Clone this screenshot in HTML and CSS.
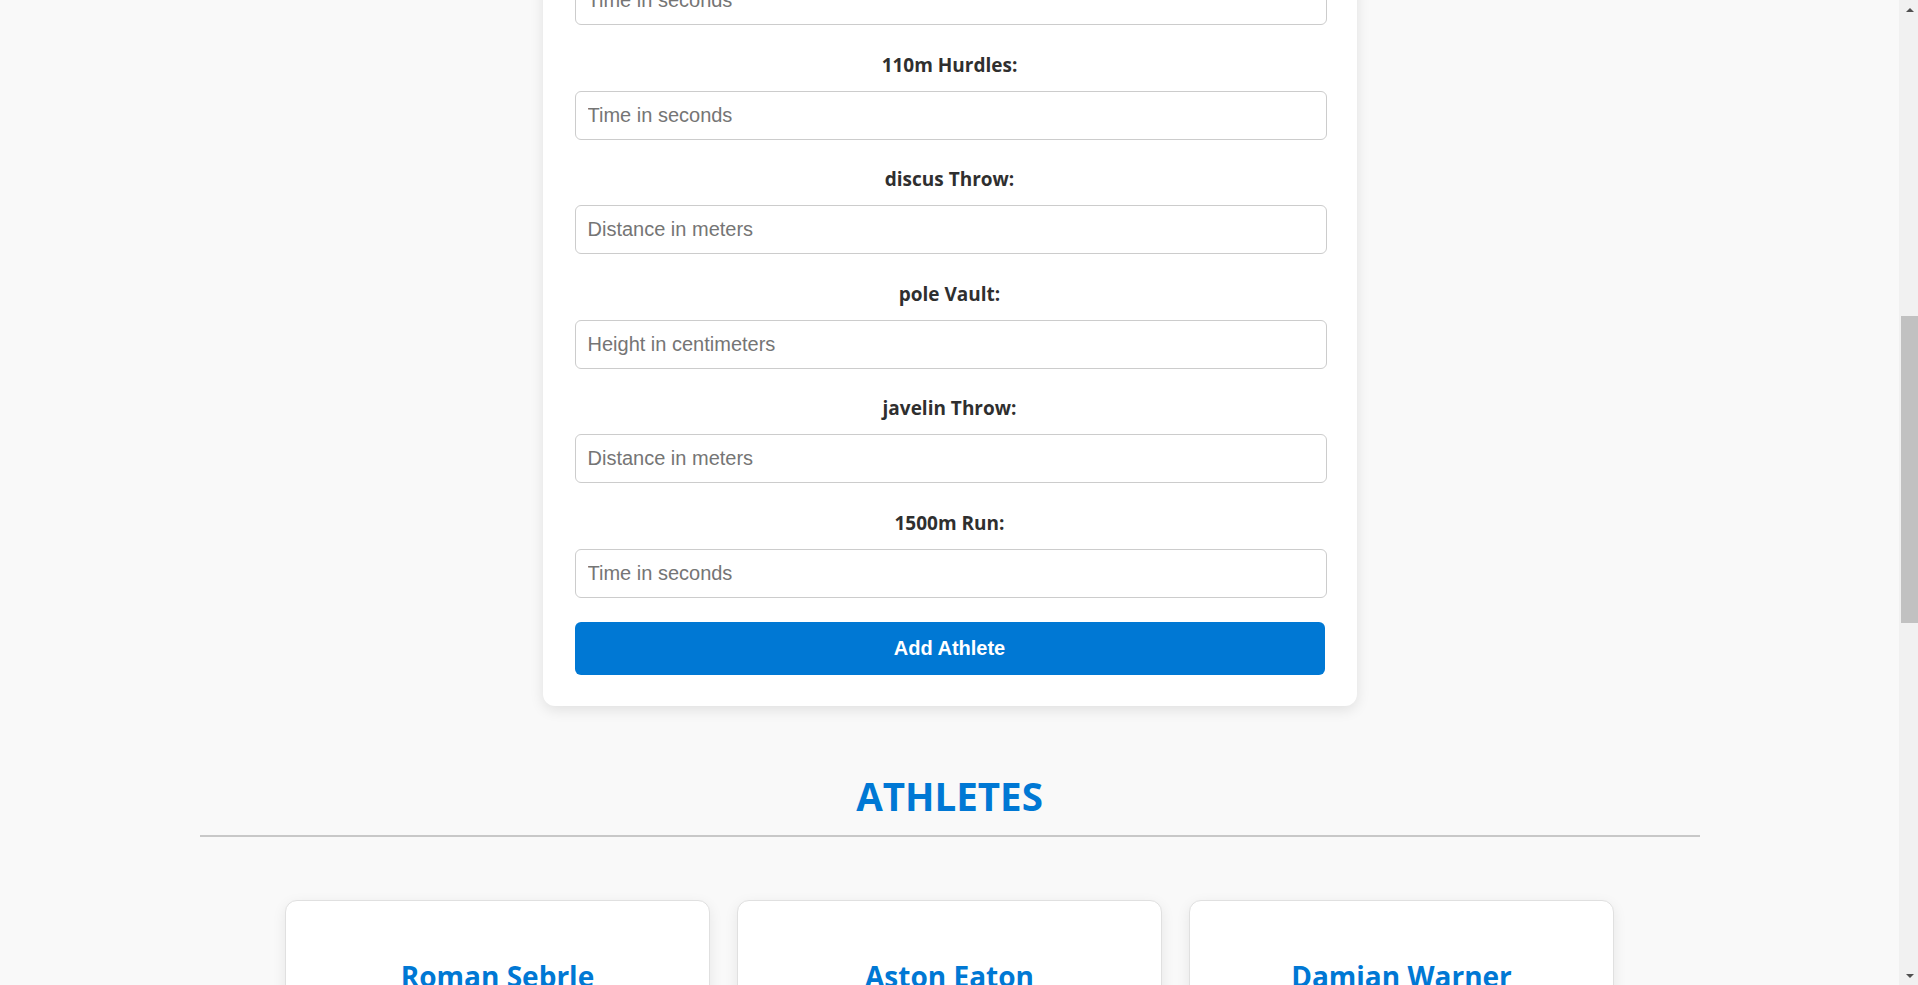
FILE: index.html
```html
<!DOCTYPE html>
<html lang="en">
<head>
<meta charset="utf-8">
<title>Decathlon Tracker</title>
<link rel="stylesheet" href="styles.css">
</head>
<body>
<div class="screen">
  <main class="page">
    <form class="form-card">
      <div class="field"><input class="field-input" type="text" placeholder="Time in seconds"></div>
      <div class="field"><label class="field-label">110m Hurdles:</label><input class="field-input" type="text" placeholder="Time in seconds"></div>
      <div class="field"><label class="field-label">discus Throw:</label><input class="field-input" type="text" placeholder="Distance in meters"></div>
      <div class="field"><label class="field-label">pole Vault:</label><input class="field-input" type="text" placeholder="Height in centimeters"></div>
      <div class="field"><label class="field-label">javelin Throw:</label><input class="field-input" type="text" placeholder="Distance in meters"></div>
      <div class="field field-last"><label class="field-label">1500m Run:</label><input class="field-input" type="text" placeholder="Time in seconds"></div>
      <button class="submit-btn" type="button">Add Athlete</button>
    </form>

    <section class="athletes">
      <h2 class="athletes-title">ATHLETES</h2>
      <hr class="athletes-rule">
      <div class="athlete-grid">
        <article class="athlete-card"><h3 class="athlete-name">Roman Sebrle</h3></article>
        <article class="athlete-card"><h3 class="athlete-name">Aston Eaton</h3></article>
        <article class="athlete-card"><h3 class="athlete-name">Damian Warner</h3></article>
      </div>
    </section>
  </main>

  <div class="scrollbar" aria-hidden="true">
    <div class="sb-btn"><span class="sb-arrow-up"></span></div>
    <div class="sb-track"><div class="sb-thumb"></div></div>
    <div class="sb-btn"><span class="sb-arrow-down"></span></div>
  </div>
</div>
</body>
</html>
```

FILE: styles.css
```css
html,
body {
  margin: 0;
  height: 100%;
  overflow: hidden;
}

body {
  background: #f9f9f9;
  font-family: "Open Sans", "Noto Sans", sans-serif;
  color: #333;
}

.screen {
  display: flex;
  height: 100vh;
  overflow: hidden;
}

.page {
  flex: 1;
  min-width: 0;
  overflow: hidden;
}

/* ---------- form card ---------- */
.form-card {
  width: 750px;
  margin: -56px auto 0;
  padding: 32px 32px 31px;
  background: #fff;
  border-radius: 12px;
  box-shadow: 0 4px 14px rgba(0, 0, 0, 0.1);
}

.field {
  display: flex;
  flex-direction: column;
  margin-bottom: 27.5px;
}
.field-last {
  margin-bottom: 24.5px;
}
.field-label {
  display: block;
  margin-bottom: 14px;
  font-size: 19px;
  line-height: 24px;
  font-weight: 700;
  text-align: center;
  color: #2f2f2f;
}
.field-input {
  box-sizing: content-box;
  width: calc(100% - 24px);
  height: 23px;
  margin: 0;
  padding: 12px;
  border: 1px solid #ccc;
  border-radius: 6px;
  background: #fff;
  font-family: "Liberation Sans", Arial, sans-serif;
  font-size: 20px;
  line-height: 23px;
  color: #333;
  outline: none;
}
.field-input::placeholder {
  color: #757575;
}

.submit-btn {
  display: block;
  width: 100%;
  margin: 0;
  padding: 15px;
  border: none;
  border-radius: 6px;
  background: #0078d4;
  color: #fff;
  font-family: "Liberation Sans", Arial, sans-serif;
  font-size: 20px;
  line-height: 22.5px;
  font-weight: 700;
  cursor: pointer;
}

/* ---------- athletes ---------- */
.athletes {
  max-width: 1500px;
  margin: 0 auto;
  padding-top: 67px;
}
.athletes-title {
  margin: 0;
  font-size: 38.5px;
  line-height: 46px;
  font-weight: 700;
  text-align: center;
  color: #0078d4;
}
.athletes-rule {
  margin: 16px 0 0;
  height: 2px;
  border: none;
  background: #c8c8c8;
}

.athlete-grid {
  margin-top: 63px;
  display: grid;
  grid-template-columns: repeat(3, 425px);
  justify-content: center;
  gap: 27px;
}
.athlete-card {
  box-sizing: border-box;
  padding: 58px 28px 40px;
  background: #fff;
  border: 1px solid #e0e0e0;
  border-radius: 12px;
  box-shadow: 0 4px 14px rgba(0, 0, 0, 0.08);
  text-align: center;
}
.athlete-name {
  margin: 0;
  font-size: 28px;
  line-height: 34px;
  font-weight: 700;
  color: #0078d4;
}

/* ---------- scrollbar ---------- */
.scrollbar {
  width: 19px;
  flex: 0 0 19px;
  display: flex;
  flex-direction: column;
  background: #f1f1f1;
}
.sb-btn {
  height: 17px;
  flex: 0 0 17px;
  display: flex;
  align-items: center;
  justify-content: center;
  padding-left: 2px;
}
.sb-arrow-up {
  width: 0;
  height: 0;
  margin-top: 2px;
  border-left: 4px solid transparent;
  border-right: 4px solid transparent;
  border-bottom: 4px solid #505050;
}
.sb-arrow-down {
  width: 0;
  height: 0;
  margin-bottom: 2px;
  border-left: 4px solid transparent;
  border-right: 4px solid transparent;
  border-top: 4px solid #505050;
}
.sb-track {
  flex: 1;
}
.sb-thumb {
  margin-top: 299px;
  margin-left: 2px;
  height: 307px;
  background: #c1c1c1;
}
```
